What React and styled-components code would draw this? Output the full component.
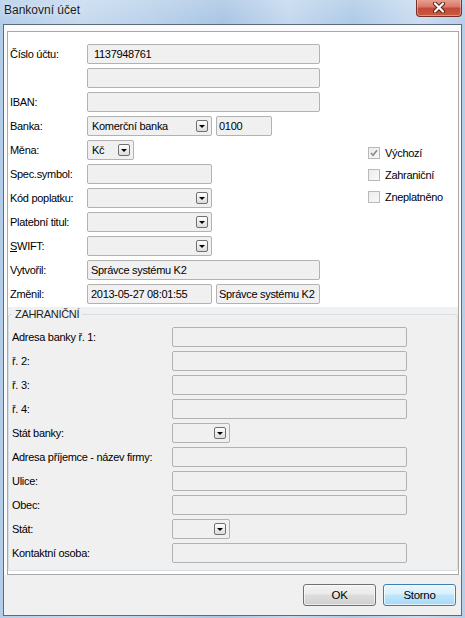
import React from 'react'
import styled, { createGlobalStyle } from 'styled-components'

const GlobalStyle = createGlobalStyle`
  html, body {
    margin: 0;
    padding: 0;
  }
  body {
    width: 465px;
    height: 618px;
    overflow: hidden;
    font-family: "Liberation Sans", Arial, sans-serif;
    font-size: 11px;
    letter-spacing: -0.3px;
    color: #000;
  }
`

const Window = styled.div`
  width: 465px;
  height: 618px;
  box-sizing: border-box;
  display: flex;
  flex-direction: column;
  background:
    linear-gradient(180deg, rgba(255,255,255,0.18) 0px, rgba(255,255,255,0) 24px),
    linear-gradient(90deg, #b3cde9 0%, #c6daef 18%, #bcd3eb 30%, #a9c5e4 48%, #c4d8ee 62%, #aecae7 76%, #cadcf0 90%, #b6cfe9 100%);
`

const TitleBar = styled.div`
  height: 24px;
  display: flex;
  align-items: flex-start;
  padding: 0 3px 0 4px;
  box-sizing: border-box;
`

const Title = styled.div`
  font-size: 12px;
  letter-spacing: 0;
  line-height: 20px;
  color: #1b1b1b;
  text-shadow: 0 0 6px rgba(255,255,255,0.8);
`

const CloseButton = styled.div`
  margin-left: auto;
  width: 46px;
  height: 18px;
  margin-top: -1px;
  box-sizing: border-box;
  border: 1px solid #7a2f26;
  border-top: none;
  border-radius: 0 0 4px 4px;
  background: linear-gradient(180deg, #e9a594 0%, #d9786a 45%, #c44a36 55%, #c95a3f 100%);
  box-shadow: inset 0 0 0 1px rgba(255,255,255,0.35);
  display: flex;
  align-items: center;
  justify-content: center;
`

const Client = styled.div`
  flex: 1;
  margin: 0 3px 2px 3px;
  border: 1px solid #5d6a79;
  background: #f0f0f0;
  display: flex;
  flex-direction: column;
`

const Body = styled.div`
  background: #fbfbfb;
  padding: 6px 2px 0 3px;
`

const Panel = styled.div`
  height: 544px;
  box-sizing: border-box;
  border: 1px solid #a9a9a9;
  background: #fff;
  display: flex;
  flex-direction: column;
  padding-bottom: 3px;
`

const TopSection = styled.div`
  display: flex;
  padding: 12px 0 3px 2px;
`

const Form = styled.div`
  display: flex;
  flex-direction: column;
  gap: 4px;
`

const Row = styled.div`
  display: flex;
  align-items: center;
  height: 20px;
  gap: 4px;
`

const Label = styled.div`
  width: ${p => p.$w}px;
  flex: none;
  margin-right: -4px;
  white-space: nowrap;
  line-height: 20px;
`

const Field = styled.div`
  width: ${p => p.$w}px;
  height: 20px;
  box-sizing: border-box;
  flex: none;
  border: 1px solid #b2b2b2;
  border-radius: 2px;
  background: #f0f0f0;
  padding-left: ${p => p.$pad ?? 3}px;
  padding-right: 3px;
  display: flex;
  align-items: center;
  white-space: nowrap;
  overflow: hidden;
`

const DropButton = styled.span`
  margin-left: auto;
  width: 12px;
  height: 12px;
  box-sizing: border-box;
  border: 1px solid #6f6f6f;
  border-radius: 2px;
  background: linear-gradient(180deg, #fdfdfd 0%, #ececec 50%, #dcdcdc 100%);
  display: flex;
  align-items: center;
  justify-content: center;

  &::after {
    content: "";
    border-left: 3px solid transparent;
    border-right: 3px solid transparent;
    border-top: 3px solid #000;
    margin-top: 1px;
  }
`

const Underline = styled.span`
  text-decoration: underline;
`

const Checks = styled.div`
  display: flex;
  flex-direction: column;
  padding: 98px 0 0 48px;
`

const CheckRow = styled.div`
  display: flex;
  align-items: center;
  height: 22px;
  gap: 5px;
`

const Box = styled.span`
  width: 12px;
  height: 12px;
  box-sizing: border-box;
  border: 1px solid #b9b9b9;
  background: linear-gradient(135deg, #ececec 0%, #f8f8f8 100%);
  display: flex;
  align-items: center;
  justify-content: center;
`

const GroupArea = styled.div`
  flex: 1;
  background: #f0f0f0;
  padding-top: 7px;
  display: flex;
  flex-direction: column;
`

const GroupBox = styled.div`
  flex: 1;
  position: relative;
  border: 1px solid #d5dfe5;
  border-radius: 3px;
  padding: 12px 0 0 3px;
  display: flex;
  flex-direction: column;
  gap: 4px;
`

const Legend = styled.div`
  position: absolute;
  top: -7px;
  left: 3px;
  padding: 0 3px;
  background: #f0f0f0;
  line-height: 13px;
  color: #1e1e1e;
`

const Footer = styled.div`
  flex: 1;
  display: flex;
  justify-content: flex-end;
  align-items: flex-start;
  gap: 7px;
  padding: 9px 5px 0 0;
`

const Button = styled.div`
  width: 73px;
  height: 22px;
  box-sizing: border-box;
  border: 1px solid ${p => (p.$active ? '#3c7fb1' : '#707070')};
  border-radius: 3px;
  background: ${p =>
    p.$active
      ? 'linear-gradient(180deg, #eaf6fd 0%, #d9f0fc 45%, #bee6fd 50%, #a7d9f5 100%)'
      : 'linear-gradient(180deg, #f2f2f2 0%, #ebebeb 45%, #dddddd 50%, #cfcfcf 100%)'};
  box-shadow: inset 0 0 0 1px ${p => (p.$active ? 'rgba(255,255,255,0.7)' : 'rgba(255,255,255,0.6)')};
  display: flex;
  align-items: center;
  justify-content: center;
  font-size: 11.5px;
`

function Combo({ w, pad, children }) {
  return (
    <Field $w={w} $pad={pad}>
      {children}
      <DropButton />
    </Field>
  )
}

function Check({ checked, children }) {
  return (
    <CheckRow>
      <Box>
        {checked && (
          <svg width="8" height="8" viewBox="0 0 8 8">
            <path d="M1 4 L3 6.2 L7 1.2" fill="none" stroke="#8a8a8a" strokeWidth="1.6" />
          </svg>
        )}
      </Box>
      <span>{children}</span>
    </CheckRow>
  )
}

const foreign = [
  { label: 'Adresa banky ř.  1:' },
  { label: 'ř. 2:' },
  { label: 'ř. 3:' },
  { label: 'ř. 4:' },
  { label: 'Stát banky:', combo: true },
  { label: 'Adresa příjemce - název firmy:' },
  { label: 'Ulice:' },
  { label: 'Obec:' },
  { label: 'Stát:', combo: true },
  { label: 'Kontaktní osoba:' },
]

export default function App() {
  return (
    <Window>
      <GlobalStyle />
      <TitleBar>
        <Title>Bankovní účet</Title>
        <CloseButton>
          <svg width="14" height="11" viewBox="0 0 14 11">
            <path d="M3 1.5 L11 9.5 M11 1.5 L3 9.5" stroke="#5a1c14" strokeWidth="4" strokeLinecap="round" />
            <path d="M3 1.5 L11 9.5 M11 1.5 L3 9.5" stroke="#fff" strokeWidth="2.2" strokeLinecap="round" />
          </svg>
        </CloseButton>
      </TitleBar>
      <Client>
        <Body>
          <Panel>
            <TopSection>
              <Form>
                <Row><Label $w={77}>Číslo účtu:</Label><Field $w={233} $pad={6}>1137948761</Field></Row>
                <Row><Label $w={77} /><Field $w={233} /></Row>
                <Row><Label $w={77}>IBAN:</Label><Field $w={233} /></Row>
                <Row>
                  <Label $w={77}>Banka:</Label>
                  <Combo w={125} pad={4}>Komerční banka</Combo>
                  <Field $w={56} $pad={2}>0100</Field>
                </Row>
                <Row><Label $w={77}>Měna:</Label><Combo w={47} pad={4}>Kč</Combo></Row>
                <Row><Label $w={77}>Spec.symbol:</Label><Field $w={125} /></Row>
                <Row><Label $w={77}>Kód poplatku:</Label><Combo w={125} /></Row>
                <Row><Label $w={77}>Platební titul:</Label><Combo w={125} /></Row>
                <Row><Label $w={77}><Underline>S</Underline>WIFT:</Label><Combo w={125} /></Row>
                <Row><Label $w={77}>Vytvořil:</Label><Field $w={233} $pad={3}>Správce systému K2</Field></Row>
                <Row>
                  <Label $w={77}>Změnil:</Label>
                  <Field $w={125} $pad={3}>2013-05-27 08:01:55</Field>
                  <Field $w={104} $pad={2}>Správce systému K2</Field>
                </Row>
              </Form>
              <Checks>
                <Check checked>Výchozí</Check>
                <Check>Zahraniční</Check>
                <Check>Zneplatněno</Check>
              </Checks>
            </TopSection>
            <GroupArea>
              <GroupBox>
                <Legend>ZAHRANIČNÍ</Legend>
                {foreign.map(f => (
                  <Row key={f.label}>
                    <Label $w={160}>{f.label}</Label>
                    {f.combo ? <Combo w={58} /> : <Field $w={235} />}
                  </Row>
                ))}
              </GroupBox>
            </GroupArea>
          </Panel>
        </Body>
        <Footer>
          <Button>OK</Button>
          <Button $active>Storno</Button>
        </Footer>
      </Client>
    </Window>
  )
}
